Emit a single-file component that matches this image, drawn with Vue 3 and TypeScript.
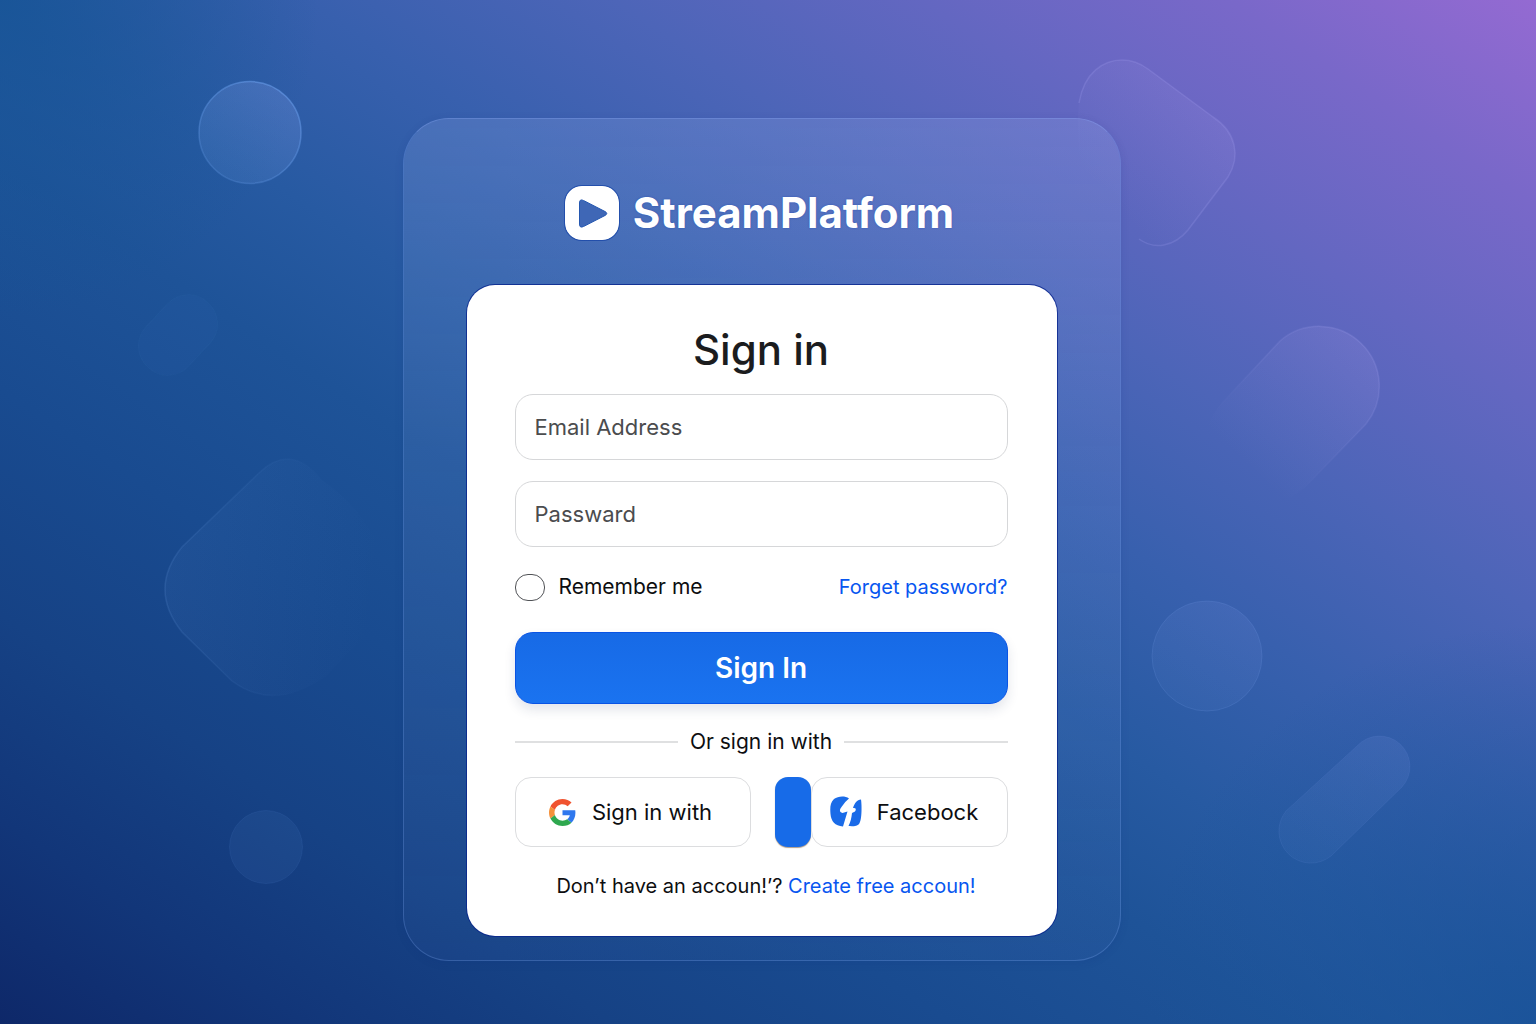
<script setup lang="ts">
import { ref } from 'vue'

const email = ref('')
const password = ref('')
const remember = ref(false)
</script>

<template>
  <main class="page">
    <svg class="shapes" viewBox="0 0 1536 1024" preserveAspectRatio="xMidYMin slice" aria-hidden="true">
      <defs>
        <linearGradient id="fill-strong" x1="0.8" y1="0" x2="0.3" y2="1">
          <stop offset="0" stop-color="#a0b4ff" stop-opacity="0.22" />
          <stop offset="1" stop-color="#78aaf0" stop-opacity="0.14" />
        </linearGradient>
        <linearGradient id="fill-soft" x1="0.8" y1="0" x2="0.2" y2="1">
          <stop offset="0" stop-color="#a0b0ff" stop-opacity="0.1" />
          <stop offset="1" stop-color="#8cb4ff" stop-opacity="0.05" />
        </linearGradient>
        <linearGradient id="fill-fade" x1="0.85" y1="0.1" x2="0.15" y2="0.85">
          <stop offset="0" stop-color="#b9aaf0" stop-opacity="0.14" />
          <stop offset="0.9" stop-color="#aaaaf0" stop-opacity="0" />
        </linearGradient>
        <linearGradient id="line-fade" x1="0.85" y1="0.1" x2="0.15" y2="0.85">
          <stop offset="0" stop-color="#b9b4ff" stop-opacity="0.16" />
          <stop offset="0.8" stop-color="#b9b4ff" stop-opacity="0" />
        </linearGradient>
        <linearGradient id="fill-left" x1="0" y1="0.4" x2="0.9" y2="0.5">
          <stop offset="0" stop-color="#6496dc" stop-opacity="0.09" />
          <stop offset="1" stop-color="#6496dc" stop-opacity="0" />
        </linearGradient>
        <linearGradient id="line-left" x1="0" y1="0.4" x2="0.9" y2="0.5">
          <stop offset="0" stop-color="#6ea0e6" stop-opacity="0.16" />
          <stop offset="1" stop-color="#6ea0e6" stop-opacity="0" />
        </linearGradient>
        <linearGradient id="line-strong" x1="0.8" y1="0" x2="0.2" y2="1">
          <stop offset="0" stop-color="#78afff" stop-opacity="0.45" />
          <stop offset="1" stop-color="#78afff" stop-opacity="0.18" />
        </linearGradient>
      </defs>
      <circle cx="250" cy="132.500" r="51" fill="url(#fill-strong)" stroke="url(#line-strong)" stroke-width="1.500" />
      <rect x="134" y="306" width="88" height="58" rx="28" transform="rotate(-47 178 335)" fill="#6496dc" fill-opacity="0.04" stroke="#6496dc" stroke-opacity="0.05" />
      <path d="M322 480 Q291 442 259 473 L182 547 Q148 589 182 632 L232 681 Q274 712 325 677 L400 600 Q380 520 322 480Z" fill="url(#fill-left)" />
      <path d="M322 480 Q291 442 259 473 L182 547 Q148 589 182 632 L232 681 Q274 712 325 677" fill="none" stroke="url(#line-left)" stroke-width="1.500" />
      <circle cx="266" cy="847" r="36.500" fill="#6491dc" fill-opacity="0.1" stroke="#6496e6" stroke-opacity="0.1" />
      <path d="M1079 103 C1084 72 1104 60 1122 60 Q1136 60 1148 69 L1213 117 C1236 132 1241 156 1228 177 L1188 230 C1174 247 1154 250 1139 239 L1090 200 Q1074 150 1079 103Z" fill="url(#fill-fade)" />
      <path d="M1079 103 C1084 72 1104 60 1122 60 Q1136 60 1148 69 L1213 117 C1236 132 1241 156 1228 177 L1188 230 C1174 247 1154 250 1139 239" fill="none" stroke="#b9b4ff" stroke-opacity="0.17" stroke-width="1.500" />
      <path d="M1280 341 A60 60 0 0 1 1366 424 L1307 485 A57 57 0 0 1 1222 403Z" fill="url(#fill-fade)" stroke="url(#line-fade)" stroke-width="1.500" />
      <circle cx="1207" cy="656" r="55" fill="url(#fill-soft)" stroke="#82a5f0" stroke-opacity="0.15" />
      <path d="M1357 746 A30 30 0 0 1 1402 787 L1331 856 A32 32 0 0 1 1286 811Z" fill="url(#fill-soft)" stroke="#82a0f0" stroke-opacity="0.1" />
    </svg>

    <section class="glass">
      <header class="brand">
        <svg class="brand-icon" viewBox="0 0 54 54" aria-hidden="true">
          <rect width="54" height="54" rx="16" fill="#fff" />
          <path d="M14.500 17 Q14.500 12.500 18.500 14.500 L40 25.500 Q43.500 27.500 40 29.500 L18.500 40.500 Q14.500 42.500 14.500 38Z" fill="#3f67b6" stroke="#2457b0" stroke-width="1" />
        </svg>
        <span class="brand-name">StreamPlatform</span>
      </header>

      <form class="card" @submit.prevent>
        <h1 class="title">Sign in</h1>

        <div class="fields">
          <input v-model="email" class="field" type="email" placeholder="Email Address" aria-label="Email Address" />
          <input v-model="password" class="field" type="password" placeholder="Passward" aria-label="Passward" />
        </div>

        <div class="options">
          <label class="remember">
            <input v-model="remember" class="check" type="checkbox" />
            <span>Remember me</span>
          </label>
          <a class="link" href="#">Forget password?</a>
        </div>

        <button class="submit" type="submit">Sign In</button>

        <div class="divider"><span>Or sign in with</span></div>

        <div class="social">
          <button class="provider google" type="button">
            <svg class="google-icon" viewBox="0 0 48 48" aria-hidden="true">
              <path fill="#f0532f" d="M24 9.500c3.540 0 6.710 1.220 9.210 3.600l6.850-6.850C35.900 2.380 30.470 0 24 0 14.620 0 6.510 5.380 2.560 13.220l7.980 6.190C12.430 13.720 17.740 9.500 24 9.500z" />
              <path fill="#2f78ee" d="M46.980 24.550c0-1.570-.150-3.090-.380-4.550H24v9.020h12.940c-.580 2.960-2.260 5.480-4.780 7.180l7.730 6c4.510-4.180 7.090-10.360 7.090-17.650z" />
              <path fill="#f5913a" d="M10.530 28.590c-.480-1.450-.760-2.990-.760-4.590s.270-3.140.760-4.590l-7.980-6.190C.920 16.460 0 20.120 0 24c0 3.880.920 7.540 2.560 10.780l7.970-6.190z" />
              <path fill="#2fa84f" d="M24 48c6.480 0 11.930-2.130 15.890-5.810l-7.730-6c-2.150 1.450-4.920 2.300-8.160 2.300-6.260 0-11.570-4.220-13.470-9.910l-7.980 6.190C6.510 42.620 14.620 48 24 48z" />
            </svg>
            <span>Sign in with</span>
          </button>
          <div class="facebook-group">
            <span class="accent"></span>
            <button class="provider facebook" type="button">
              <svg class="facebook-icon" viewBox="0 0 32 32" aria-hidden="true">
                <path fill="#1a6be8" d="M19 2.500 C15 -.5 8 0 4 3 C0 7 0 12 .5 18 C1 25 5 30 13 30.500 L17.500 15.500 L12.500 17 C9 16.500 9.500 13.500 11.500 11 Q14.500 6 19 2.500Z" />
                <path fill="#1a6be8" d="M31 3.500 C27 4 24.500 7 23 12 C26 11.500 26.500 13.500 25 15.500 L22 17 C21.500 22 20.500 26 18.500 30 C22 29.500 25 31.500 28.500 28.500 C32 26 32 10 31 3.500 Z" />
              </svg>
              <span>Facebock</span>
            </button>
          </div>
        </div>

        <p class="signup">Don’t have an accoun!’? <a class="link" href="#">Create free accoun!</a></p>
      </form>
    </section>
  </main>
</template>

<style>
body {
  margin: 0;
}
</style>

<style scoped>
.page {
  position: relative;
  box-sizing: border-box;
  min-height: 100vh;
  padding: 118px 13px 62px 0;
  display: flex;
  justify-content: center;
  align-items: flex-start;
  overflow: hidden;
  font-family: Inter, 'Liberation Sans', sans-serif;
  font-size: 22px;
  line-height: 28px;
  color: #0d0e10;
  background:
    radial-gradient(circle at 0 0, rgba(22, 84, 150, 0.8), rgba(22, 84, 150, 0) 320px),
    radial-gradient(circle at 100% 100%, rgba(24, 82, 152, 0.8), rgba(24, 82, 152, 0) 400px),
    linear-gradient(
      to top right,
      #0e2869 0%,
      #123679 10%,
      #164285 20%,
      #194b90 31%,
      #1e5398 42%,
      #275aa2 50%,
      #3860ae 60%,
      #4d65b8 70%,
      #6367c1 80%,
      #7968c9 90%,
      #946ad2 100%
    );
}

.shapes {
  position: absolute;
  inset: 0;
  width: 100%;
  height: 100%;
}

.glass {
  position: relative;
  box-sizing: border-box;
  width: 100%;
  max-width: 718px;
  padding: 67px 63px 24px;
  border: 1px solid rgba(130, 170, 245, 0.3);
  border-top-color: rgba(150, 180, 250, 0.42);
  border-radius: 46px;
  background: linear-gradient(to bottom, rgba(170, 195, 250, 0.18), rgba(160, 185, 250, 0.11) 40%, rgba(120, 150, 230, 0.05));
  background-clip: padding-box;
  box-shadow: 0 2px 8px rgba(10, 40, 120, 0.12);
}

.brand {
  display: flex;
  align-items: center;
  justify-content: center;
  gap: 14px;
  margin-bottom: 45px;
  padding-right: 4px;
}

.brand-icon {
  width: 54px;
  height: 54px;
  border-radius: 17px;
  box-shadow: 0 0 0 1px rgba(20, 65, 165, 0.7);
}

.brand-name {
  font-size: 42px;
  line-height: 54px;
  font-weight: 700;
  color: #fff;
  text-shadow: 0 0 2px rgba(20, 60, 170, 0.6);
}

.card {
  padding: 37px 49px 36px 48px;
  border-radius: 28px;
  background: #fff;
  box-shadow: 0 0 0 1px rgba(8, 36, 140, 0.8);
}

.title {
  margin: 0 0 16px;
  font-size: 42px;
  line-height: 56px;
  font-weight: 500;
  text-align: center;
  color: #1b1c1e;
}

.fields {
  display: flex;
  flex-direction: column;
  gap: 21px;
}

.field {
  box-sizing: border-box;
  width: 100%;
  height: 66px;
  padding: 0 19px;
  border: 1px solid #d6d7d9;
  border-radius: 18px;
  background: #fff;
  font: inherit;
  color: #0d0e10;
}

.field::placeholder {
  color: #4b4c4e;
  opacity: 1;
}

.options {
  display: flex;
  justify-content: space-between;
  align-items: center;
  margin: 25px 0 30px;
  height: 30px;
}

.remember {
  display: flex;
  align-items: center;
  gap: 14px;
  font-size: 21px;
}

.check {
  appearance: none;
  box-sizing: border-box;
  width: 30px;
  height: 27px;
  margin: 0;
  border: 1px solid #505256;
  border-radius: 13px;
  background: #fff;
}

.check:checked {
  background: #1a6be8;
}

.link {
  font-size: 20px;
  color: #0756f0;
  text-decoration: none;
}

.submit {
  display: block;
  width: 100%;
  height: 72px;
  border: 1px solid #0a54e4;
  border-radius: 18px;
  background: linear-gradient(to bottom, #176ae6, #1a73f0);
  box-shadow: 0 6px 12px rgba(30, 50, 90, 0.12);
  font: inherit;
  font-size: 28px;
  font-weight: 600;
  color: #fff;
}

.divider {
  display: flex;
  align-items: center;
  gap: 12px;
  margin: 24px 0 21px;
  font-size: 21px;
}

.divider::before,
.divider::after {
  content: '';
  flex: 1;
  height: 2px;
  background: #dfe0e1;
}

.social {
  display: flex;
  gap: 24px;
}

.provider {
  box-sizing: border-box;
  height: 70px;
  display: flex;
  align-items: center;
  justify-content: center;
  padding: 0;
  border: 1px solid #dcdddf;
  border-radius: 16px;
  background: #fff;
  font: inherit;
  color: #0d0e10;
}

.google {
  flex: 235;
  gap: 16px;
  padding-right: 4px;
}

.facebook-group {
  flex: 238;
  display: flex;
}

.accent {
  width: 36px;
  height: 70px;
  border-radius: 13px;
  background: #176be8;
  box-shadow: 0 1px 1px rgba(120, 90, 60, 0.6);
}

.facebook {
  flex: 1;
  gap: 15px;
  padding-right: 10px;
}

.google-icon {
  width: 27px;
  height: 27px;
}

.facebook-icon {
  width: 32px;
  height: 32px;
}

.signup {
  margin: 25px 0 0;
  padding-left: 10px;
  font-size: 20px;
  text-align: center;
}
</style>
